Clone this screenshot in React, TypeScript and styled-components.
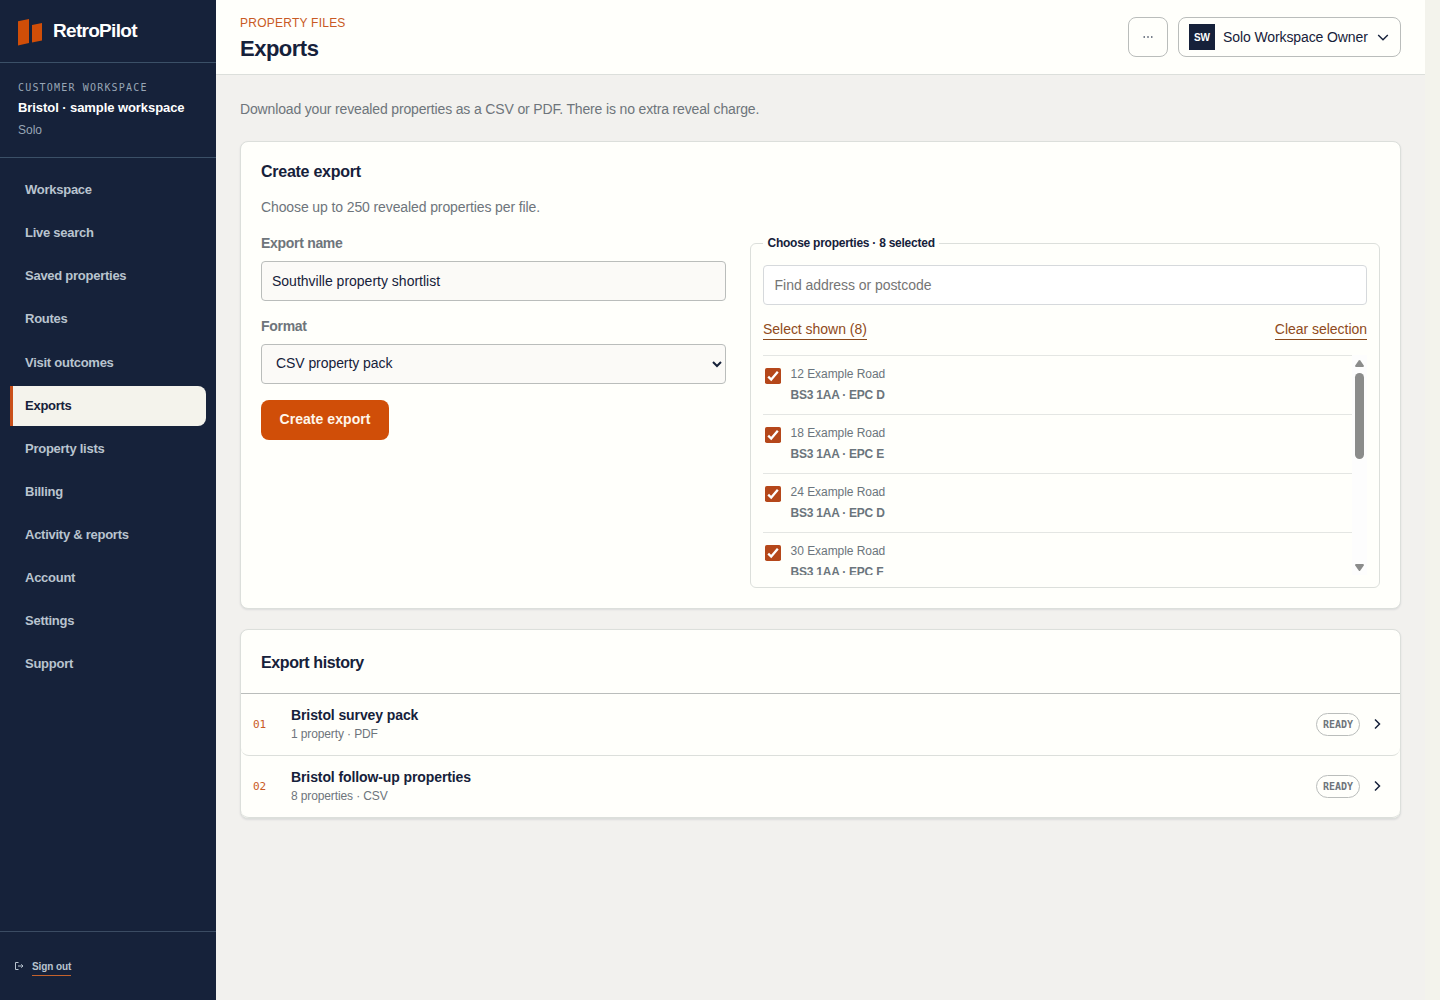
import React, { useState } from "react";
import styled, { createGlobalStyle } from "styled-components";

const ink = "#16213a";
const paper = "#fffffb";
const rust = "#d04e08";
const line = "#dcdfdb";

const GlobalStyle = createGlobalStyle`
  *, *::before, *::after { box-sizing: border-box; }
  html { background: #f3f3ec; }
  body { margin: 0; font-family: "Liberation Sans", Arial, sans-serif; color: ${ink}; overflow: hidden; }
  button, input, select { font: inherit; color: inherit; letter-spacing: inherit; }
  h1, h2, h3, p { margin: 0; }
`;

const Shell = styled.div`
  display: grid;
  grid-template-columns: 216px 1209px;
  height: 1000px;
`;

const Sidebar = styled.aside`
  display: flex;
  flex-direction: column;
  background: #16223a;
  color: #b9c4cf;
`;

const Brand = styled.div`
  display: flex;
  align-items: center;
  gap: 11px;
  height: 63px;
  padding: 0 18px;
  border-bottom: 1px solid #3b5067;
  color: #fff;
  font-size: 19px;
  font-weight: 700;
  letter-spacing: -0.7px;
  svg { display: block; margin-top: 2px; }
`;

const Tenant = styled.div`
  display: flex;
  flex-direction: column;
  height: 95px;
  padding: 18px 18px 0;
  border-bottom: 1px solid #3b5067;
`;

const TenantLabel = styled.span`
  font: 10px/14px "DejaVu Sans Mono", monospace;
  letter-spacing: 1.18px;
  color: #98a6b5;
`;

const TenantName = styled.strong`
  margin-top: 3px;
  font-size: 13px;
  line-height: 20px;
  letter-spacing: -0.07px;
  color: #fff;
`;

const TenantPlan = styled.span`
  margin-top: 3px;
  font-size: 12px;
  line-height: 18px;
  color: #98a6b5;
`;

const Nav = styled.nav`
  display: flex;
  flex: 1;
  flex-direction: column;
  gap: 3.1px;
  padding: 12.15px 10px 0;
`;

const NavItem = styled.a<{ $active?: boolean }>`
  display: flex;
  align-items: center;
  height: 40px;
  padding: 0 12px 1px;
  border-left: 3px solid ${(p) => (p.$active ? "#c9501a" : "transparent")};
  border-radius: ${(p) => (p.$active ? "0 8px 8px 0" : "0")};
  background: ${(p) => (p.$active ? "#f4f3ec" : "transparent")};
  color: ${(p) => (p.$active ? ink : "#b9c4cf")};
  font-size: 13px;
  font-weight: 700;
  letter-spacing: -0.26px;
`;

const SidebarFoot = styled.div`
  display: flex;
  align-items: center;
  gap: 8px;
  height: 69px;
  padding: 1px 15px 0;
  border-top: 1px solid #3b4c63;
`;

const SignOut = styled.a`
  margin-top: 2px;
  padding-bottom: 1px;
  border-bottom: 1px solid #c4622c;
  font-size: 10px;
  line-height: 15px;
  font-weight: 700;
  letter-spacing: -0.1px;
`;

const Main = styled.main`
  display: flex;
  flex-direction: column;
  background: #f2f1ee;
`;

const TopBar = styled.header`
  display: flex;
  justify-content: space-between;
  height: 75px;
  padding: 17px 24px 0;
  border-bottom: 1px solid ${line};
  background: ${paper};
`;

const Eyebrow = styled.div`
  margin-top: -3px;
  font-size: 12px;
  line-height: 18px;
  letter-spacing: 0.24px;
  color: #c95a24;
`;

const PageTitle = styled.h1`
  margin-top: 1px;
  font-size: 22px;
  line-height: 32px;
  letter-spacing: -0.5px;
`;

const Tools = styled.div`
  display: flex;
  gap: 10px;
`;

const ToolButton = styled.button<{ $wide?: boolean }>`
  display: flex;
  align-items: center;
  justify-content: ${(p) => (p.$wide ? "flex-start" : "center")};
  width: ${(p) => (p.$wide ? "223px" : "40px")};
  height: 40px;
  padding: ${(p) => (p.$wide ? "0 10px" : "0")};
  border: 1px solid #babdbb;
  border-radius: 8px;
  background: ${paper};
  font-size: 14px;
  letter-spacing: -0.1px;
`;

const Avatar = styled.span`
  display: grid;
  place-items: center;
  width: 26px;
  height: 26px;
  margin-right: 8px;
  background: ${ink};
  color: #fff;
  font-size: 10px;
  font-weight: 700;
`;

const OwnerName = styled.span`
  width: 145px;
  margin-right: 9px;
  white-space: nowrap;
  text-align: left;
`;

const Content = styled.div`
  display: flex;
  flex-direction: column;
  gap: 20px;
  padding: 24px 24px 0;
`;

const Lead = styled.p`
  height: 22px;
  font-size: 14px;
  line-height: 20px;
  letter-spacing: -0.155px;
  color: #6e757b;
`;

const Card = styled.section`
  border: 1px solid ${line};
  border-radius: 8px;
  background: ${paper};
  box-shadow: 0 1px 2px rgba(22, 33, 58, 0.1);
`;

const CreateCard = styled(Card)`
  height: 468px;
  padding: 19px 20px 0;
`;

const CardTitle = styled.h2`
  font-size: 16px;
  line-height: 22px;
  letter-spacing: -0.26px;
`;

const CardHint = styled(Lead)`
  margin: 14px 0 13px;
  letter-spacing: -0.11px;
`;

const FormGrid = styled.div`
  display: grid;
  grid-template-columns: 465px 630px;
  gap: 24px;
`;

const FormColumn = styled.div`
  display: flex;
  flex-direction: column;
  align-items: flex-start;
`;

const Field = styled.label`
  display: flex;
  flex-direction: column;
  gap: 7px;
  width: 100%;
  margin-bottom: 14px;
  font-size: 14px;
  line-height: 22px;
  font-weight: 700;
  letter-spacing: -0.3px;
  color: #6e757b;
`;

const TextBox = styled.input`
  width: 100%;
  height: 40px;
  padding: 0 10px;
  border: 1px solid #babdbb;
  border-radius: 4px;
  outline: none;
  background: #fbfaf7;
  color: ${ink};
  font-size: 14px;
  font-weight: 400;
  letter-spacing: 0;
`;

const SearchBox = styled(TextBox)`
  padding: 0 10.6px;
  border-color: #d6d9dc;
  background: #fff;
  letter-spacing: -0.05px;
  &::placeholder { color: #757575; opacity: 1; }
`;

const SelectBox = styled.select`
  width: 100%;
  height: 40px;
  padding: 0 0 2px 10px;
  border: 1px solid #babdbb;
  border-radius: 4px;
  background: #fbfaf7;
  color: ${ink};
  font-size: 14px;
  font-weight: 400;
  letter-spacing: -0.07px;
`;

const PrimaryButton = styled.button`
  width: 128px;
  height: 40px;
  margin-top: 2px;
  padding: 0 0 2px;
  border: 0;
  border-radius: 8px;
  background: ${rust};
  color: #fff6ea;
  font-size: 14px;
  font-weight: 700;
  letter-spacing: 0.06px;
`;

const Picker = styled.fieldset`
  min-width: 0;
  height: 354px;
  margin: 2px 0 0;
  padding: 13px 12px 0;
  border: 1px solid ${line};
  border-radius: 6px;
`;

const PickerLegend = styled.legend`
  padding: 0 4.5px;
  font-size: 12px;
  line-height: 18px;
  font-weight: 700;
  letter-spacing: -0.25px;
`;

const PickerActions = styled.div`
  display: flex;
  justify-content: space-between;
  margin: 15px 0;
`;

const TextButton = styled.button`
  height: 20px;
  padding: 0;
  border: 0;
  border-bottom: 1px solid #8a4a1c;
  background: none;
  color: #8f4a20;
  font-size: 14px;
  line-height: 19px;
  letter-spacing: -0.03px;
`;

const ScrollArea = styled.div`
  display: grid;
  grid-template-columns: 1fr 15px;
  height: 220px;
  overflow: hidden;
`;

const PropertyList = styled.div`
  overflow: hidden;
`;

const PropertyRow = styled.label`
  display: flex;
  gap: 9.6px;
  height: 59px;
  padding: 8px 2px 0;
  border-top: 1px solid #e4e6e3;
  font-size: 12px;
  line-height: 21px;
  color: #6b757c;
`;

const Check = styled.svg`
  flex: none;
  width: 16px;
  height: 16px;
  margin: 4px 0 0;
`;

const PropertyText = styled.span`
  display: flex;
  flex-direction: column;
  letter-spacing: -0.05px;
  strong { letter-spacing: -0.24px; }
`;

const ScrollTrack = styled.div`
  display: flex;
  flex-direction: column;
  align-items: center;
  padding: 5px 0 4px;
  background: #fdfdfd;
  svg:last-child { margin-top: auto; }
`;

const ScrollThumb = styled.div`
  width: 9px;
  height: 86px;
  margin-top: 6px;
  border-radius: 5px;
  background: #8b8c8b;
`;

const HistoryTitle = styled(CardTitle)`
  height: 64px;
  padding: 22px 20px 0;
  border-bottom: 1px solid #babdbb;
  letter-spacing: -0.4px;
`;

const HistoryRow = styled.div`
  display: grid;
  grid-template-columns: 38px 1fr 44px 21px;
  align-items: center;
  height: 62px;
  padding: 0 19px 0 12px;
  border-bottom: 1px solid ${line};
  border-radius: 0 0 8px 8px;
`;

const HistoryIndex = styled.span`
  font: 11px "DejaVu Sans Mono", monospace;
  color: #c95a24;
`;

const HistoryText = styled.div`
  display: flex;
  flex-direction: column;
  padding-bottom: 2px;
  strong { font-size: 14px; line-height: 20px; letter-spacing: -0.1px; }
  span { font-size: 12px; line-height: 18px; letter-spacing: -0.12px; color: #6e757b; }
`;

const Status = styled.span`
  display: grid;
  place-items: center;
  height: 23px;
  border: 1px solid #babdbb;
  border-radius: 12px;
  color: #6e757b;
  font: 700 10px "DejaVu Sans Mono", monospace;
`;

const HistoryChevron = styled.svg`
  justify-self: end;
  margin-bottom: 2px;
`;

const navLabels = [
  "Workspace", "Live search", "Saved properties", "Routes", "Visit outcomes", "Exports",
  "Property lists", "Billing", "Activity & reports", "Account", "Settings", "Support",
];

const properties = [
  { address: "12 Example Road", detail: "BS3 1AA · EPC D" },
  { address: "18 Example Road", detail: "BS3 1AA · EPC E" },
  { address: "24 Example Road", detail: "BS3 1AA · EPC D" },
  { address: "30 Example Road", detail: "BS3 1AA · EPC F" },
];

const exportsList = [
  { index: "01", name: "Bristol survey pack", detail: "1 property · PDF" },
  { index: "02", name: "Bristol follow-up properties", detail: "8 properties · CSV" },
];

export default function App() {
  const [name, setName] = useState("Southville property shortlist");
  return (
    <>
      <GlobalStyle />
      <Shell>
        <Sidebar>
          <Brand>
            <svg width="24" height="27" viewBox="0 0 24 27" fill={rust}>
              <path d="M0 2.2 11 0V24L0 26.5Z" />
              <path d="M14 6.1 24 4V21.4L14 23.6Z" />
            </svg>
            RetroPilot
          </Brand>
          <Tenant>
            <TenantLabel>CUSTOMER WORKSPACE</TenantLabel>
            <TenantName>Bristol · sample workspace</TenantName>
            <TenantPlan>Solo</TenantPlan>
          </Tenant>
          <Nav>
            {navLabels.map((label) => (
              <NavItem key={label} $active={label === "Exports"}>{label}</NavItem>
            ))}
          </Nav>
          <SidebarFoot>
            <svg width="9" height="9" viewBox="0 0 9 9" fill="none" stroke="#b9c4cf">
              <path d="M3.5 .5H.5V7.5H3.5M3 4H8M6.3 2.3 8 4 6.3 5.7" />
            </svg>
            <SignOut>Sign out</SignOut>
          </SidebarFoot>
        </Sidebar>
        <Main>
          <TopBar>
            <div>
              <Eyebrow>PROPERTY FILES</Eyebrow>
              <PageTitle>Exports</PageTitle>
            </div>
            <Tools>
              <ToolButton aria-label="More">
                <svg width="10" height="2" viewBox="0 0 10 2" fill={ink}>
                  <circle cx="1.2" cy="1" r=".8" /><circle cx="5" cy="1" r=".8" /><circle cx="8.8" cy="1" r=".8" />
                </svg>
              </ToolButton>
              <ToolButton $wide>
                <Avatar>SW</Avatar>
                <OwnerName>Solo Workspace Owner</OwnerName>
                <svg width="12" height="7" viewBox="0 0 12 7" fill="none" stroke={ink} strokeWidth="1.4">
                  <path d="M1.2 1 6 5.8 10.8 1" />
                </svg>
              </ToolButton>
            </Tools>
          </TopBar>
          <Content>
            <Lead>Download your revealed properties as a CSV or PDF. There is no extra reveal charge.</Lead>
            <CreateCard>
              <CardTitle>Create export</CardTitle>
              <CardHint>Choose up to 250 revealed properties per file.</CardHint>
              <FormGrid>
                <FormColumn>
                  <Field>
                    Export name
                    <TextBox value={name} onChange={(e) => setName(e.target.value)} />
                  </Field>
                  <Field>
                    Format
                    <SelectBox defaultValue="csv">
                      <option value="csv">CSV property pack</option>
                    </SelectBox>
                  </Field>
                  <PrimaryButton>Create export</PrimaryButton>
                </FormColumn>
                <Picker>
                  <PickerLegend>Choose properties · 8 selected</PickerLegend>
                  <SearchBox placeholder="Find address or postcode" />
                  <PickerActions>
                    <TextButton>Select shown (8)</TextButton>
                    <TextButton>Clear selection</TextButton>
                  </PickerActions>
                  <ScrollArea>
                    <PropertyList>
                      {properties.map((p) => (
                        <PropertyRow key={p.address}>
                          <Check viewBox="0 0 16 16" role="checkbox" aria-checked="true">
                            <rect width="16" height="16" rx="1.8" fill="#b5471a" />
                            <path d="M3.2 8.6 6.2 11.6 12.8 3.8" fill="none" stroke="#fff" strokeWidth="2.3" />
                          </Check>
                          <PropertyText>
                            <span>{p.address}</span>
                            <strong>{p.detail}</strong>
                          </PropertyText>
                        </PropertyRow>
                      ))}
                    </PropertyList>
                    <ScrollTrack>
                      <svg width="9" height="7" viewBox="0 0 9 7" fill="#8b8c8b"><path d="M3.7.6Q4.5-.4 5.3.6L8.8 5.4Q9.2 7 8 7H1Q-.2 7 .2 5.4Z" /></svg>
                      <ScrollThumb />
                      <svg width="9" height="7" viewBox="0 0 9 7" fill="#8b8c8b"><path d="M3.7 6.4Q4.5 7.4 5.3 6.4L8.8 1.6Q9.2 0 8 0H1Q-.2 0 .2 1.6Z" /></svg>
                    </ScrollTrack>
                  </ScrollArea>
                </Picker>
              </FormGrid>
            </CreateCard>
            <Card>
              <HistoryTitle>Export history</HistoryTitle>
              {exportsList.map((item) => (
                <HistoryRow key={item.index}>
                  <HistoryIndex>{item.index}</HistoryIndex>
                  <HistoryText>
                    <strong>{item.name}</strong>
                    <span>{item.detail}</span>
                  </HistoryText>
                  <Status>READY</Status>
                  <HistoryChevron width="7" height="12" viewBox="0 0 7 12" fill="none" stroke={ink} strokeWidth="1.5">
                    <path d="M1 1.5 5.5 6 1 10.5" />
                  </HistoryChevron>
                </HistoryRow>
              ))}
            </Card>
          </Content>
        </Main>
      </Shell>
    </>
  );
}
